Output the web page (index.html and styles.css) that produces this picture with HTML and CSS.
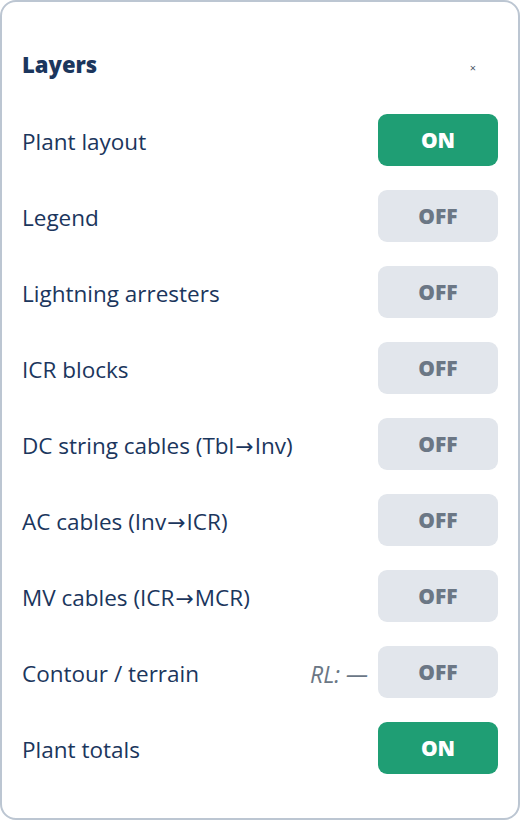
FILE: index.html
```html
<!DOCTYPE html>
<html>
<head>
<meta charset="utf-8">
<link rel="stylesheet" href="styles.css">
</head>
<body>
<div class="panel">
  <div class="head">
    <h2 class="title">Layers</h2>
    <button class="close">×</button>
  </div>
  <div class="rows">
    <div class="row"><span class="label">Plant layout</span><div class="right"><button class="tog on">ON</button></div></div>
    <div class="row"><span class="label">Legend</span><div class="right"><button class="tog">OFF</button></div></div>
    <div class="row"><span class="label">Lightning arresters</span><div class="right"><button class="tog">OFF</button></div></div>
    <div class="row"><span class="label">ICR blocks</span><div class="right"><button class="tog">OFF</button></div></div>
    <div class="row"><span class="label">DC string cables (Tbl<span class="arr">→</span>Inv)</span><div class="right"><button class="tog">OFF</button></div></div>
    <div class="row"><span class="label">AC cables (Inv<span class="arr">→</span>ICR)</span><div class="right"><button class="tog">OFF</button></div></div>
    <div class="row"><span class="label">MV cables (ICR<span class="arr">→</span>MCR)</span><div class="right"><button class="tog">OFF</button></div></div>
    <div class="row"><span class="label">Contour / terrain</span><div class="right"><span class="rl">RL: —</span><button class="tog">OFF</button></div></div>
    <div class="row"><span class="label">Plant totals</span><div class="right"><button class="tog on">ON</button></div></div>
  </div>
</div>
</body>
</html>
```

FILE: styles.css
```css
* { box-sizing: border-box; }
html, body { margin: 0; padding: 0; background: #fff; }
body { font-family: "Open Sans", "Noto Sans", sans-serif; }
.panel {
  width: 520px;
  height: 820px;
  border: 2px solid #bcc6d2;
  border-radius: 16px;
  padding: 44px 20px 0 20px;
  background: #fff;
}
.head {
  display: flex;
  justify-content: space-between;
  align-items: center;
  height: 36px;
}
.title {
  margin: 0;
  font-size: 22px;
  font-weight: 800;
  color: #1b365d;
}
.close {
  border: 0;
  background: none;
  padding: 0;
  margin: 6px 22px 0 0;
  font-size: 11px;
  color: #4a5568;
  font-family: inherit;
  line-height: 1;
}
.rows {
  display: flex;
  flex-direction: column;
  gap: 24px;
  margin-top: 32px;
}
.row {
  display: flex;
  justify-content: space-between;
  align-items: center;
  height: 52px;
}
.label {
  font-size: 22.5px;
  color: #1b365d;
  padding-top: 3px;
}
.arr { font-family: "DejaVu Sans", sans-serif; font-size: 22px; padding: 0 1px; }
.right { display: flex; align-items: center; gap: 10px; }
.rl {
  font-style: italic;
  font-size: 23px;
  color: #6b7785;
  padding-top: 3px;
}
.tog {
  width: 120px;
  height: 52px;
  border: 0;
  border-radius: 9px;
  background: #e2e6ec;
  color: #6b7785;
  font-family: inherit;
  font-weight: 800;
  font-size: 21px;
  padding: 0;
}
.tog.on {
  background: #1f9e74;
  color: #fff;
}
```
